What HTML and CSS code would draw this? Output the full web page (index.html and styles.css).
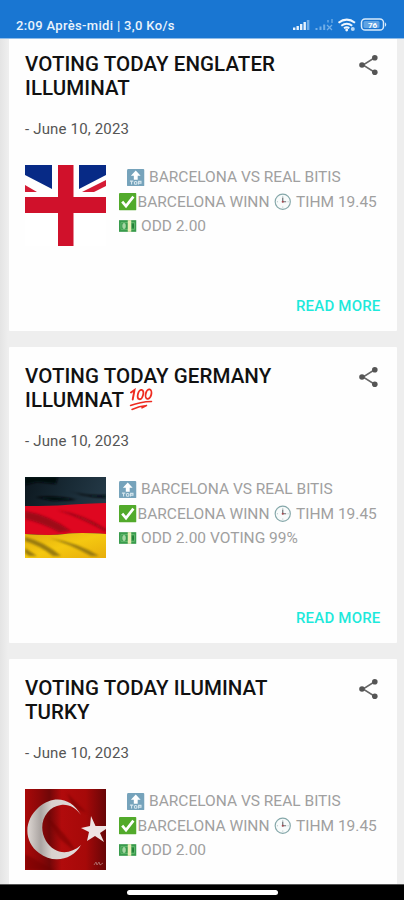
FILE: index.html
```
<!DOCTYPE html>
<html lang="en">
<head>
<meta charset="utf-8">
<title>Voting today</title>
<link rel="stylesheet" href="styles.css">
</head>
<body>
<svg class="defs" aria-hidden="true">
  <symbol id="share" viewBox="0 0 24 24"><path d="M18 4.5 6 12l12 7.5" fill="none" stroke="#666" stroke-width="1.5"/><circle cx="17.800" cy="4.800" r="2.800" fill="#555"/><circle cx="5" cy="12" r="2.800" fill="#555"/><circle cx="17.800" cy="19.200" r="2.800" fill="#555"/></symbol>
  <symbol id="top" viewBox="0 0 18 18"><rect width="18" height="18" rx="1.5" fill="#76a3bb"/><path d="M9 1.5 14 7h-3v4H7V7H4z" fill="#fff"/><path d="M3 12.5h3.5M4.7 12.5v3.5M11.8 16v-3.3h2.6v1.8h-2.6" fill="none" stroke="#d4e5ed" stroke-width="1.1"/><rect x="7.6" y="12.8" width="2.6" height="2.8" rx="1" fill="none" stroke="#d4e5ed" stroke-width="1.1"/></symbol>
  <symbol id="check" viewBox="0 0 18 18"><rect width="18" height="18" rx="1" fill="#52aa2b"/><path d="M3.3 8.8 7.2 13.4 14.8 3.8" fill="none" stroke="#fff" stroke-width="2.8"/></symbol>
  <symbol id="money" viewBox="0 0 18 12"><rect width="18" height="12" fill="#399b4c"/><path d="M2 2.5h14v7H2z" fill="none" stroke="#62b86c"/><ellipse cx="5.2" cy="6" rx="1.8" ry="3" fill="#a6d6a3"/><rect x="9" width="3.6" height="12" fill="#e8edb6"/><ellipse cx="14.5" cy="6" rx="1" ry="2.5" fill="#217c37"/></symbol>
  <symbol id="clock" viewBox="0 0 18 18"><circle cx="9" cy="9" r="7.8" fill="#f8fbfb" stroke="#86a8aa" stroke-width="1.2"/><path d="M9 3v1M9 14v1M3 9h1M14 9h1" stroke="#9bb1b2" stroke-width=".8"/><path d="M9 4.5V9h3.5" fill="none" stroke="#666c70" stroke-width="1.2"/><circle cx="9" cy="9" r="1.1" fill="#a94a50"/></symbol>
  <symbol id="hundred" viewBox="0 0 25 23"><g fill="none" stroke="#ee2b20" stroke-linecap="round"><path d="M2 4.500 5.500 2 3.700 11.500" stroke-width="1.900"/><ellipse cx="11.500" cy="6.500" rx="2.600" ry="4.800" transform="rotate(14 11.500 6.500)" stroke-width="1.800"/><ellipse cx="19.500" cy="6.100" rx="2.800" ry="4.800" transform="rotate(14 19.500 6.100)" stroke-width="1.800"/><path d="M1.500 17.500Q11 13.700 22.500 13.400M3 21.500Q10 18 18 17.400l-5 2.500" stroke-width="1.500"/></g></symbol>
</svg>
<header class="status">
  <span class="status-text">2:09 Après-midi | 3,0 Ko/s</span>
  <svg class="status-icons" viewBox="0 0 98 18">
    <g fill="#e7f2fc"><rect x="1" y="11.500" width="2.400" height="2.500"/><rect x="4.500" y="10" width="2.400" height="4"/><rect x="8" y="8" width="2.400" height="6"/><rect x="11.500" y="6" width="2.400" height="8"/></g><rect x="14.800" y="4" width="2.600" height="10" fill="#72aee7"/>
    <g fill="#72aee7"><rect x="23.500" y="12" width="2" height="2"/><rect x="27.500" y="10.500" width="2" height="3.500"/><rect x="31.200" y="8.500" width="2" height="5.500"/></g><path d="m35 9 5 5m0-5-5 5M36 6.500V4m4 3V3" fill="none" stroke="#72aee7" stroke-width="1.300"/>
    <g fill="none" stroke="#f0f7fe" stroke-width="2"><path d="M46.500 6.800q8.300-6.300 16.500 0"/><path d="M49.300 9.800q5.500-4.100 10.900 0"/><path d="M52 12.300q2.700-2 5.300 0"/></g><circle cx="54.700" cy="14" r="1.400" fill="#f0f7fe"/><circle cx="60.800" cy="13" r="2" fill="#b8d8f5"/>
    <rect x="69.500" y="3" width="22" height="11" rx="3.600" fill="none" stroke="#d7eafb" stroke-width="1.500"/><rect x="71.500" y="5" width="16" height="7" rx="1.500" fill="#5fa3e3"/><path d="M93 6.200q2.500 2.300 0 4.600z" fill="#d7eafb"/><text x="76" y="11.500" class="battery">76</text>
  </svg>
</header>
<main class="feed">
  <article class="card">
    <div class="head"><h2>VOTING TODAY ENGLATER<br>ILLUMINAT</h2><svg class="share"><use href="#share"/></svg></div>
    <p class="date">- June 10, 2023</p>
    <div class="content">
      <svg class="flag" viewBox="0 0 81 81"><rect width="81" height="81" fill="#fff"/><path d="M0 0h27v24L0 10zM54 0h27v10L54 24z" fill="#072a86"/><path d="M0 20v7h12zM57 27h12l12-6v-6z" fill="#d51b35"/><path d="M33 0h15.500v32H81v16H48.500v33H33V48H0V32h33z" fill="#d0112b"/></svg>
      <div class="lines">
        <p class="indent"><svg class="emoji"><use href="#top"/></svg><span class="l1">BARCELONA VS REAL BITIS</span></p>
        <p><svg class="emoji"><use href="#check"/></svg><span class="l2">BARCELONA WINN</span><svg class="emoji clock"><use href="#clock"/></svg><span class="l3">TIHM 19.45</span></p>
        <p><svg class="emoji money"><use href="#money"/></svg><span class="l1">ODD 2.00</span></p>
      </div>
    </div>
    <a class="more">READ MORE</a>
  </article>
  <article class="card">
    <div class="head"><h2>VOTING TODAY GERMANY<br>ILLUMNAT <svg class="hundred"><use href="#hundred"/></svg></h2><svg class="share"><use href="#share"/></svg></div>
    <p class="date">- June 10, 2023</p>
    <div class="content">
      <svg class="flag" viewBox="0 0 81 81">
        <defs><linearGradient id="night" x2="1" y2=".4"><stop stop-color="#0c171e"/><stop offset=".5" stop-color="#182a35"/><stop offset="1" stop-color="#263b49"/></linearGradient><linearGradient id="gold" x2="1" y2="1"><stop stop-color="#e0ae0e"/><stop offset=".5" stop-color="#f5c811"/><stop offset="1" stop-color="#e7ad0b"/></linearGradient><filter id="soft"><feGaussianBlur stdDeviation="1"/></filter></defs>
        <rect width="81" height="81" fill="url(#night)"/><path d="M0 0h33l-2 7L12 5 0 8zM34 10q20 10 47 8v3Q54 20 34 10zM10 20q25-2 42 3L28 24z" fill="#05090d" filter="url(#soft)"/><path d="M0 29Q28 29 40 28T81 26v31Q55 55 40 57T0 57z" fill="#df0720"/><path d="M0 34q24 4 46 20l-12 1Q17 46 0 42zM32 33q26 4 49 19v3Q59 42 32 33z" fill="#8e0718" opacity=".8" filter="url(#soft)"/><path d="M0 57q26 2 40 0t41 0v24H0z" fill="url(#gold)"/><path d="M0 60q20 5 36 19h-8Q14 68 0 64zM24 61q30 5 50 18h-8Q45 67 24 61zM0 71l12 8H4L0 76z" fill="#8a7010" opacity=".85" filter="url(#soft)"/>
      </svg>
      <div class="lines">
        <p><svg class="emoji"><use href="#top"/></svg><span class="l1">BARCELONA VS REAL BITIS</span></p>
        <p><svg class="emoji"><use href="#check"/></svg><span class="l2">BARCELONA WINN</span><svg class="emoji clock"><use href="#clock"/></svg><span class="l3">TIHM 19.45</span></p>
        <p><svg class="emoji money"><use href="#money"/></svg><span class="l1">ODD 2.00 VOTING 99%</span></p>
      </div>
    </div>
    <a class="more">READ MORE</a>
  </article>
  <article class="card">
    <div class="head"><h2>VOTING TODAY ILUMINAT<br>TURKY</h2><svg class="share"><use href="#share"/></svg></div>
    <p class="date">- June 10, 2023</p>
    <div class="content">
      <svg class="flag" viewBox="0 0 81 81">
        <defs><linearGradient id="red" x2="1"><stop stop-color="#a90909"/><stop offset=".17" stop-color="#8d0708"/><stop offset=".3" stop-color="#710708"/><stop offset=".45" stop-color="#b10b0c"/><stop offset=".75" stop-color="#a60909"/><stop offset="1" stop-color="#670607"/></linearGradient><linearGradient id="silk" x2="1"><stop stop-color="#ddd7d3"/><stop offset=".25" stop-color="#aaa4a1"/><stop offset=".45" stop-color="#d8d2ce"/><stop offset="1" stop-color="#e4dddd"/></linearGradient></defs>
        <rect width="81" height="81" fill="url(#red)"/><path d="M20 27q20 15 32 37L35 50zM0 65l30 16H0zM42 4l20 20-14-6z" fill="#700506" opacity=".5" filter="url(#soft)"/><path d="M56 26C46 8 28 6 14 18-2 32-1 53 14 64c14 11 34 7 42-8-12 11-27 9-35-4-9-15-1-34 15-36 8-1 15 3 20 10z" fill="url(#silk)"/><path d="m66 27 4.500 10H81v3l-6 4 4 9-9-6-8 5 2-9-8-4 9-2z" fill="#eee4e3"/><path d="m69 76 2-3 1 3 2-3 1 3 3-2" fill="none" stroke="#b47876" stroke-width=".8"/>
      </svg>
      <div class="lines">
        <p class="indent"><svg class="emoji"><use href="#top"/></svg><span class="l1">BARCELONA VS REAL BITIS</span></p>
        <p><svg class="emoji"><use href="#check"/></svg><span class="l2">BARCELONA WINN</span><svg class="emoji clock"><use href="#clock"/></svg><span class="l3">TIHM 19.45</span></p>
        <p><svg class="emoji money"><use href="#money"/></svg><span class="l1">ODD 2.00</span></p>
      </div>
    </div>
  </article>
</main>
<footer class="nav"><span></span></footer>
</body>
</html>
```
FILE: styles.css
```
* { box-sizing: border-box; }
body { margin: 0; height: 900px; overflow: hidden; display: flex; flex-direction: column; background: #eee; font-family: Roboto, sans-serif; }
h2, p { margin: 0; }
.defs { display: none; }
.status { flex: none; height: 39px; padding: 11px 14px 0 16px; display: flex; justify-content: space-between; background: #1976d2; color: #e9f3fc; border-bottom: 1px solid #8fbce8; }
.status-text { font-size: 13px; line-height: 29px; font-weight: 500; letter-spacing: .33px; white-space: nowrap; }
.status-icons { width: 98px; height: 18px; margin-top: 5px; }
.battery { font: 700 8px Roboto, sans-serif; fill: #fff; }
.feed { flex: 1; min-height: 0; overflow: hidden; display: flex; flex-direction: column; gap: 16px; padding: 0 7.500px 0 8.500px; background: linear-gradient(90deg, #e4e4e4, #eee 8px); }
.card { flex: none; height: 296px; padding: 17px 16px 0 16.500px; display: flex; flex-direction: column; background: #fefefe; border-radius: 1px; }
.card:first-child { margin-top: -4px; }
.head { display: flex; justify-content: space-between; height: 68px; }
h2 { font-size: 20.500px; line-height: 24px; font-weight: 500; letter-spacing: .08px; color: #111; white-space: nowrap; }
.hundred { width: 25px; height: 23px; vertical-align: -4px; }
.share { width: 24px; height: 24px; flex: none; margin-top: 1px; }
.date { height: 45px; font-size: 15px; line-height: 19px; letter-spacing: .17px; color: #555; }
.content { display: flex; gap: 13px; height: 126px; }
.flag { width: 81px; height: 81px; flex: none; }
.lines p { display: flex; align-items: center; height: 24.600px; font-size: 15.500px; line-height: 24px; font-weight: 400; color: #a0a0a0; white-space: nowrap; }
.lines .indent { padding-left: 8px; }
.emoji { width: 17.500px; height: 17.500px; flex: none; }
.emoji.money { height: 12px; width: 17.500px; }
.emoji.clock { margin: 0 4px 0 5px; }
.l1 { margin-left: 4.500px; }
.l2 { margin-left: 1px; }
.more { align-self: flex-end; font-size: 15px; line-height: 30px; font-weight: 500; letter-spacing: .2px; color: #1de9db; }
.nav { flex: none; height: 16px; background: #000; border-top: 1px solid #555; display: flex; justify-content: center; }
.nav span { width: 151px; height: 5px; margin-top: 5px; border-radius: 3px; background: #fff; }
```
